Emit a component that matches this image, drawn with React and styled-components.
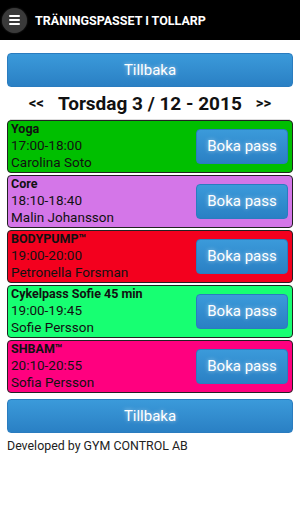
import styled, { createGlobalStyle } from 'styled-components';

const GlobalStyle = createGlobalStyle`
  html, body {
    margin: 0;
    padding: 0;
    background: #fff;
    font-family: Roboto, "Liberation Sans", sans-serif;
  }
`;

const Page = styled.div`
  width: 300px;
  min-height: 514px;
  background: #fff;
`;

const Header = styled.header`
  height: 40px;
  background: #000;
  display: flex;
  align-items: center;
  padding-left: 2px;
  gap: 8px;
`;

const MenuButton = styled.div`
  width: 25px;
  height: 25px;
  border-radius: 50%;
  background: #3a3a3a;
  box-shadow: 0 0 2px rgba(255, 255, 255, 0.2);
  display: flex;
  flex-direction: column;
  align-items: center;
  justify-content: center;
  gap: 2px;
  span {
    display: block;
    width: 11px;
    height: 2px;
    background: #fff;
    border-radius: 1px;
  }
`;

const Title = styled.h1`
  margin: 0;
  color: #fff;
  font-size: 12.5px;
  font-weight: 700;
  font-family: Roboto, "Liberation Sans", sans-serif;
`;

const Content = styled.main`
  padding: 13px 7px 0;
  display: flex;
  flex-direction: column;
`;

const BlueButton = styled.button`
  display: flex;
  align-items: center;
  justify-content: center;
  border: 1px solid #2a7cbf;
  border-radius: 4px;
  background: linear-gradient(#3b9ada, #2a80c4);
  color: #fff;
  font-family: Roboto, sans-serif;
  font-size: 15px;
  text-shadow: 0 0 4px rgba(255, 255, 255, 0.6);
  padding: 0;
  cursor: pointer;
`;

const WideButton = styled(BlueButton)`
  width: 100%;
  height: 34px;
`;

const DateRow = styled.div`
  display: flex;
  justify-content: center;
  gap: 14px;
  font-size: 19px;
  font-weight: 700;
  color: #111;
  height: 32px;
  align-items: center;
  border-bottom: 1px solid #ddd;
  margin: 0 3px;
`;

const Arrow = styled.span`
  font-size: 15px;
`;

const List = styled.div`
  display: flex;
  flex-direction: column;
  gap: 2px;
  margin-bottom: 6px;
`;

const Card = styled.div`
  height: 53px;
  box-sizing: border-box;
  border: 1px solid #222;
  border-radius: 4px;
  background: ${(p) => p.$color};
  display: flex;
  align-items: center;
  justify-content: space-between;
  padding: 0 4px 0 3px;
`;

const Info = styled.div`
  display: flex;
  flex-direction: column;
  color: #111;
  font-size: 13.5px;
  line-height: 17px;
  margin-top: -2px;
`;

const Name = styled.span`
  font-weight: 700;
  font-size: 12.5px;
`;

const BookButton = styled(BlueButton)`
  width: 92px;
  height: 35px;
  margin-bottom: 1px;
`;

const Footer = styled.p`
  margin: 5px 0 0;
  font-size: 12.4px;
  color: #222;
`;

const classes = [
  { name: 'Yoga', time: '17:00-18:00', who: 'Carolina Soto', color: '#00bf00' },
  { name: 'Core', time: '18:10-18:40', who: 'Malin Johansson', color: '#d476e8' },
  { name: 'BODYPUMP™', time: '19:00-20:00', who: 'Petronella Forsman', color: '#f3001e' },
  { name: 'Cykelpass Sofie 45 min', time: '19:00-19:45', who: 'Sofie Persson', color: '#17ff72' },
  { name: 'SHBAM™', time: '20:10-20:55', who: 'Sofia Persson', color: '#ff007f' },
];

export default function App() {
  return (
    <Page>
      <GlobalStyle />
      <Header>
        <MenuButton>
          <span />
          <span />
          <span />
        </MenuButton>
        <Title>TRÄNINGSPASSET I TOLLARP</Title>
      </Header>
      <Content>
        <WideButton>Tillbaka</WideButton>
        <DateRow>
          <Arrow>&lt;&lt;</Arrow>
          <span>Torsdag 3 / 12 - 2015</span>
          <Arrow>&gt;&gt;</Arrow>
        </DateRow>
        <List>
          {classes.map((c) => (
            <Card key={c.name} $color={c.color}>
              <Info>
                <Name>{c.name}</Name>
                <span>{c.time}</span>
                <span>{c.who}</span>
              </Info>
              <BookButton>Boka pass</BookButton>
            </Card>
          ))}
        </List>
        <WideButton>Tillbaka</WideButton>
        <Footer>Developed by GYM CONTROL AB</Footer>
      </Content>
    </Page>
  );
}
